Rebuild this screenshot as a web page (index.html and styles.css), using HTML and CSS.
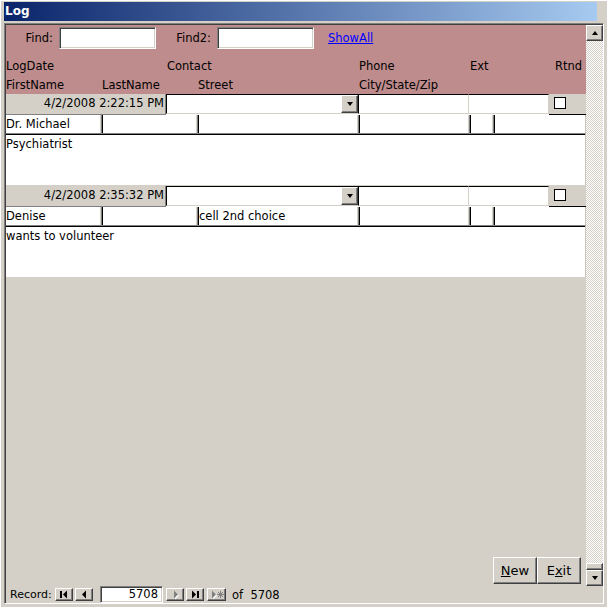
FILE: index.html
```html
<!DOCTYPE html>
<html>
<head>
<meta charset="utf-8">
<link rel="stylesheet" href="styles.css">
</head>
<body>
<div class="win">
  <div class="title"><span>Log</span></div>
  <div class="frame">
    <div class="client">
      <div class="main">
        <div class="form">
          <div class="header">
            <div class="findrow">
              <span class="flabel find1">Find:</span>
              <span class="input sunken"></span>
              <span class="flabel find2">Find2:</span>
              <span class="input sunken"></span>
              <a class="showall" href="#">ShowAll</a>
            </div>
            <div class="lrow g1">
              <span>LogDate</span><span>Contact</span><span>Phone</span><span>Ext</span><span class="rt">Rtnd</span>
            </div>
            <div class="lrow g2">
              <span>FirstName</span><span>LastName</span><span>Street</span><span>City/State/Zip</span><span></span><span></span>
            </div>
          </div>

          <div class="rec">
            <div class="r1 g1">
              <div class="date">4/2/2008 2:22:15 PM</div>
              <div class="combo"><span class="drop raised"><span class="tri-down"></span></span></div>
              <div class="phone"></div>
              <div class="ext"></div>
              <div class="chk"><span class="box"></span></div>
            </div>
            <div class="r2 g2">
              <div class="c">Dr. Michael</div><div class="c"></div><div class="c"></div><div class="c"></div><div class="c"></div><div class="c"></div>
            </div>
            <div class="notes">Psychiatrist</div>
          </div>

          <div class="rec">
            <div class="r1 g1">
              <div class="date">4/2/2008 2:35:32 PM</div>
              <div class="combo"><span class="drop raised"><span class="tri-down"></span></span></div>
              <div class="phone"></div>
              <div class="ext"></div>
              <div class="chk"><span class="box"></span></div>
            </div>
            <div class="r2 g2">
              <div class="c">Denise</div><div class="c"></div><div class="c">cell 2nd choice</div><div class="c"></div><div class="c"></div><div class="c"></div>
            </div>
            <div class="notes">wants to volunteer</div>
          </div>

          <div class="spacer"></div>
          <div class="btnrow">
            <span class="cmd raised"><u>N</u>ew</span>
            <span class="cmd raised">E<u>x</u>it</span>
          </div>
        </div>
        <div class="vscroll">
          <span class="sbtn raised"><span class="tri-up"></span></span>
          <span class="track"></span>
          <span class="thumb raised"></span>
          <span class="sbtn raised"><span class="tri-down"></span></span>
        </div>
      </div>
      <div class="nav">
        <span class="navlabel">Record:</span>
        <span class="nbtn raised first">
          <svg width="16" height="11" viewBox="0 0 16 11"><rect x="4" y="2" width="2" height="7" fill="#000"/><polygon points="11,1.5 11,9.5 7,5.5" fill="#000"/></svg>
        </span>
        <span class="nbtn raised">
          <svg width="16" height="11" viewBox="0 0 16 11"><polygon points="10,1.5 10,9.5 6,5.5" fill="#000"/></svg>
        </span>
        <span class="numbox sunken">5708</span>
        <span class="nbtn raised n3">
          <svg width="16" height="11" viewBox="0 0 16 11"><polygon points="8,2.5 8,10.5 12,6.5" fill="#fff"/><polygon points="7,1.5 7,9.5 11,5.5" fill="#808080"/></svg>
        </span>
        <span class="nbtn raised">
          <svg width="16" height="11" viewBox="0 0 16 11"><polygon points="5,1.5 5,9.5 9,5.5" fill="#000"/><rect x="10" y="2" width="2" height="7" fill="#000"/></svg>
        </span>
        <span class="nbtn raised n5">
          <svg width="16" height="11" viewBox="0 0 16 11"><polygon points="4,2.5 4,10.5 8,6.5" fill="#fff"/><polygon points="3,1.5 3,9.5 7,5.5" fill="#808080"/><g stroke="#808080" stroke-width="1"><line x1="11.5" y1="2" x2="11.5" y2="9"/><line x1="8" y1="5.5" x2="15" y2="5.5"/><line x1="9" y1="3" x2="14" y2="8"/><line x1="14" y1="3" x2="9" y2="8"/></g></svg>
        </span>
        <span class="oftext">of&nbsp; 5708</span>
      </div>
    </div>
  </div>
</div>
</body>
</html>
```

FILE: styles.css
```css
* { box-sizing: border-box; }
html, body { margin: 0; padding: 0; }
body {
  font-family: "DejaVu Sans", "Liberation Sans", sans-serif;
  font-size: 11.5px;
  color: #000;
  background: #d4d0c8;
}
.win {
  width: 607px;
  height: 607px;
  padding: 2px 3px 3px 4px;
  background: #d4d0c8;
  display: flex;
  flex-direction: column;
  box-shadow: inset 1px 1px 0 #fff;
  overflow: hidden;
}
.title {
  height: 19px;
  margin-right: 7px;
  margin-bottom: 2px;
  background: linear-gradient(to right, #0a246a, #a6caf0);
  color: #fff;
  font-weight: bold;
  font-size: 12px;
  line-height: 19px;
  padding-left: 1px;
}
.frame {
  height: 581px;
  border-top: 1px solid #808080;
  border-left: 1px solid #808080;
  border-right: 1px solid #fff;
  border-bottom: 1px solid #fff;
}
.client {
  height: 100%;
  border-top: 1px solid #404040;
  border-left: 1px solid #404040;
  display: flex;
  flex-direction: column;
}
.main {
  height: 561px;
  display: flex;
}
.form {
  width: 580px;
  display: flex;
  flex-direction: column;
  background: #d4d0c8;
}
.header {
  height: 69px;
  background: #be8c8c;
  padding-top: 2px;
}
.findrow {
  display: flex;
  align-items: center;
  height: 22px;
}
.flabel { line-height: 22px; text-align: right; white-space: nowrap; }
.find1 { width: 47px; margin-right: 6px; }
.find2 { width: 38px; margin-left: 17px; margin-right: 6px; }
.input {
  display: inline-block;
  width: 97px;
  height: 22px;
  background: #fff;
}
.sunken {
  border: 1px solid;
  border-color: #808080 #fff #fff #808080;
  box-shadow: inset 1px 1px 0 #404040, inset -1px -1px 0 #d4d0c8;
}
.raised {
  background: #d4d0c8;
  border: 1px solid;
  border-color: #fff #404040 #404040 #fff;
  box-shadow: inset -1px -1px 0 #808080;
}
.showall {
  margin-left: 14px;
  color: #0000ff;
  text-decoration: underline;
}
.g1 { display: grid; grid-template-columns: 160px 192px 111px 80px 37px; }
.g2 { display: grid; grid-template-columns: 95px 96px 161px 111px 24px 93px; }
.lrow { line-height: 13px; height: 13px; white-space: nowrap; }
.lrow span { padding-left: 1px; }
.lrow span:first-child { padding-left: 0; }
.lrow.g1 { margin-top: 11px; }
.lrow.g2 { margin-top: 6px; }
.lrow .rt { text-align: right; padding-right: 4px; }

.rec { height: 92px; display: flex; flex-direction: column; }
.r1 { height: 21px; background: #fff; }
.date {
  background: #d4d0c8;
  border-right: 1px solid #808080;
  border-bottom: 1px solid #808080;
  text-align: right;
  line-height: 19px;
  padding-right: 1px;
  white-space: nowrap;
}
.combo {
  position: relative;
  border-top: 1px solid #000;
  border-left: 1px solid #000;
  border-bottom: 1px solid #d4d0c8;
  height: 20px;
}
.drop {
  position: absolute;
  right: 0;
  top: 0;
  width: 17px;
  height: 18px;
  display: flex;
  align-items: center;
  justify-content: center;
}
.tri-down {
  width: 0; height: 0;
  border-left: 3.5px solid transparent;
  border-right: 3.5px solid transparent;
  border-top: 4px solid #000;
}
.tri-up {
  width: 0; height: 0;
  border-left: 3.5px solid transparent;
  border-right: 3.5px solid transparent;
  border-bottom: 4px solid #000;
}
.phone {
  border-top: 1px solid #000;
  border-left: 1px solid #000;
  border-right: 1px solid #d4d0c8;
  border-bottom: 1px solid #d4d0c8;
  height: 20px;
}
.ext {
  border-top: 1px solid #000;
  border-right: 1px solid #d4d0c8;
  border-bottom: 1px solid #d4d0c8;
  height: 20px;
}
.chk {
  background: #d4d0c8;
  border-bottom: 1px solid #000;
  padding: 3px 0 0 5px;
}
.box {
  display: block;
  width: 12px;
  height: 12px;
  background: #fff;
  border: 1px solid #000;
}
.r2 { height: 18px; background: #fff; }
.c {
  border-left: 1px solid #808080;
  box-shadow: inset 1px 0 0 #000;
  border-right: 1px solid #d4d0c8;
  padding-left: 1px;
  line-height: 18px;
  white-space: nowrap;
  overflow: hidden;
}
.c:first-child { border-left: none; box-shadow: none; padding-left: 0; }
.c:last-child { border-right: 1px solid #c8c4bc; }
.notes {
  height: 53px;
  background: #fff;
  border-top: 1px solid #808080;
  box-shadow: inset 0 1px 0 #000;
  border-bottom: 1px solid #d4d0c8;
  border-right: 1px solid #c8c4bc;
  padding: 4px 0 0 0;
  line-height: 13px;
}
.spacer { flex: 1; }
.btnrow {
  display: flex;
  justify-content: flex-end;
  padding-right: 5px;
  padding-bottom: 2px;
}
.cmd {
  width: 44px;
  height: 27px;
  font-size: 13px;
  line-height: 25px;
  text-align: center;
}
.vscroll {
  width: 17px;
  display: flex;
  flex-direction: column;
}
.sbtn {
  height: 16px;
  display: flex;
  align-items: center;
  justify-content: center;
}
.track {
  flex: 1;
  background-color: #fff;
  background-image: repeating-conic-gradient(#d4d0c8 0 25%, #fff 0 50%);
  background-size: 2px 2px;
}
.thumb { height: 7px; }
.nav {
  height: 17px;
  display: flex;
  align-items: center;
}
.navlabel { width: 45px; margin-left: 4px; font-size: 11px; }
.nbtn {
  width: 18px;
  height: 13px;
  margin-right: 2px;
  display: flex;
  align-items: center;
  justify-content: center;
}
.nbtn svg { display: block; }
.numbox {
  width: 63px;
  height: 17px;
  margin-left: 5px;
  margin-right: 3px;
  background: #fff;
  text-align: right;
  padding-right: 4px;
  line-height: 15px;
}
.n5 { margin-left: 1px; width: 19px; }
.oftext { margin-left: 4px; }
```
